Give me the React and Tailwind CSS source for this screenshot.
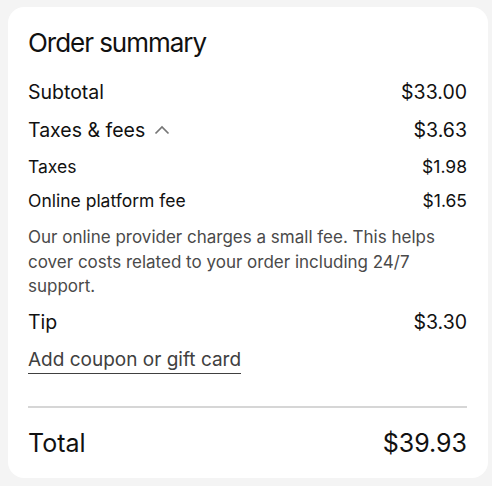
export default function App() {
  const row = "flex justify-between items-center";
  return (
    <div className="min-h-screen bg-[#f4f4f4] pl-2 pr-1 py-[7px] font-['Inter',sans-serif] text-[#111]">
      <div className="bg-white rounded-2xl pl-5 pr-[21px] pt-[20px] pb-[19px]">
        <h2 className="text-[26px] leading-[32px] tracking-[-0.04em]">Order summary</h2>
        <div className={`${row} text-[19.5px] leading-[26px] mt-[20px]`}>
          <span>Subtotal</span>
          <span>$33.00</span>
        </div>
        <div className={`${row} text-[19.5px] leading-[26px] mt-[12px]`}>
          <span className="flex items-center gap-[9px]">
            Taxes &amp; fees
            <svg width="16" height="10" viewBox="0 0 16 10" fill="none" stroke="#767676" strokeWidth="1.7">
              <path d="M1.5 8.5 8 2l6.5 6.5" />
            </svg>
          </span>
          <span>$3.63</span>
        </div>
        <div className={`${row} text-[17.5px] leading-[24px] mt-[12px]`}>
          <span>Taxes</span>
          <span>$1.98</span>
        </div>
        <div className={`${row} text-[17.5px] leading-[24px] mt-[10px]`}>
          <span>Online platform fee</span>
          <span>$1.65</span>
        </div>
        <p className="text-[17px] leading-[24.5px] text-[#4a4a4a] mt-[12px] pr-4">
          Our online provider charges a small fee. This helps cover costs related to your order including 24/7 support.
        </p>
        <div className={`${row} text-[19.5px] leading-[26px] mt-[10px]`}>
          <span>Tip</span>
          <span>$3.30</span>
        </div>
        <div className="mt-[12px] text-[19px] leading-[26px]">
          <span className="text-[#404040] border-b border-[#404040] pb-[2px]">Add coupon or gift card</span>
        </div>
        <div className="h-[2px] bg-[#d6d6d6] mt-[33px]" />
        <div className={`${row} text-[25px] leading-[32px] mt-[19px]`}>
          <span>Total</span>
          <span>$39.93</span>
        </div>
      </div>
    </div>
  );
}
